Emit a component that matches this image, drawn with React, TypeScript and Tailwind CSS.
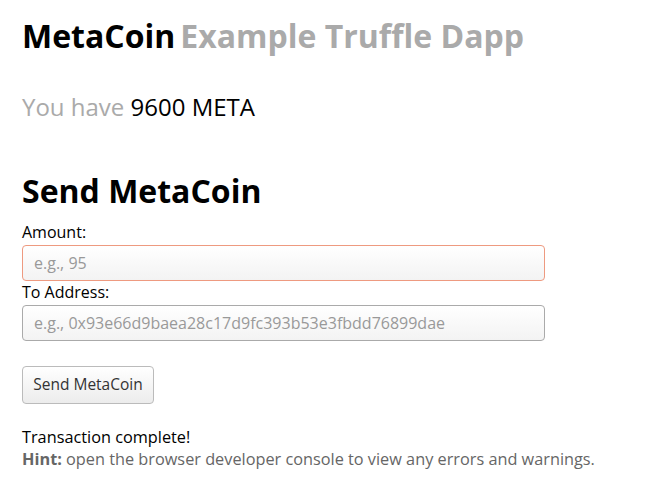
export default function App() {
  return (
    <div className="min-h-screen bg-white px-[22px] pt-[12px] font-['Open_Sans',sans-serif] text-black">
      {/* Title */}
      <h1 className="text-[32px] font-bold leading-[48px]">
        MetaCoin<span className="ml-[5px] text-[#aaaaaa]">Example Truffle Dapp</span>
      </h1>

      {/* Balance */}
      <h3 className="mt-[32px] text-[24px] leading-[30px]">
        <span className="text-[#aaaaaa]">You have</span> <span>9600</span> META
      </h3>

      {/* Send form */}
      <h1 className="mt-[45px] text-[32px] font-bold leading-[48px]">Send MetaCoin</h1>

      <div className="mt-[7px] flex flex-col">
        <label className="text-[16px] leading-[21px]">Amount:</label>
        <input
          type="text"
          placeholder="e.g., 95"
          className="mt-[2px] h-[36px] w-[523px] rounded-[4px] border border-[#ee9a80] bg-gradient-to-b from-white to-[#f3f3f3] px-[11px] text-[16px] text-[#333] outline-none placeholder:text-[#999]"
        />
        <label className="mt-[1px] text-[16px] leading-[21px]">To Address:</label>
        <input
          type="text"
          placeholder="e.g., 0x93e66d9baea28c17d9fc393b53e3fbdd76899dae"
          className="mt-[2px] h-[36px] w-[523px] rounded-[4px] border border-[#aaaaaa] bg-gradient-to-b from-white to-[#f3f3f3] px-[11px] text-[16px] text-[#333] outline-none placeholder:text-[#999]"
        />
      </div>

      <button className="mt-[25px] h-[38px] w-[132px] rounded-[4px] border border-[#bbbbbb] bg-gradient-to-b from-white to-[#ececec] text-[15.5px] text-[#333]">
        Send MetaCoin
      </button>

      <div className="mt-[22px] text-[16.3px] leading-[22px]">
        <div>Transaction complete!</div>
        <div className="text-[#666]">
          <strong>Hint:</strong> open the browser developer console to view any errors and warnings.
        </div>
      </div>
    </div>
  );
}
